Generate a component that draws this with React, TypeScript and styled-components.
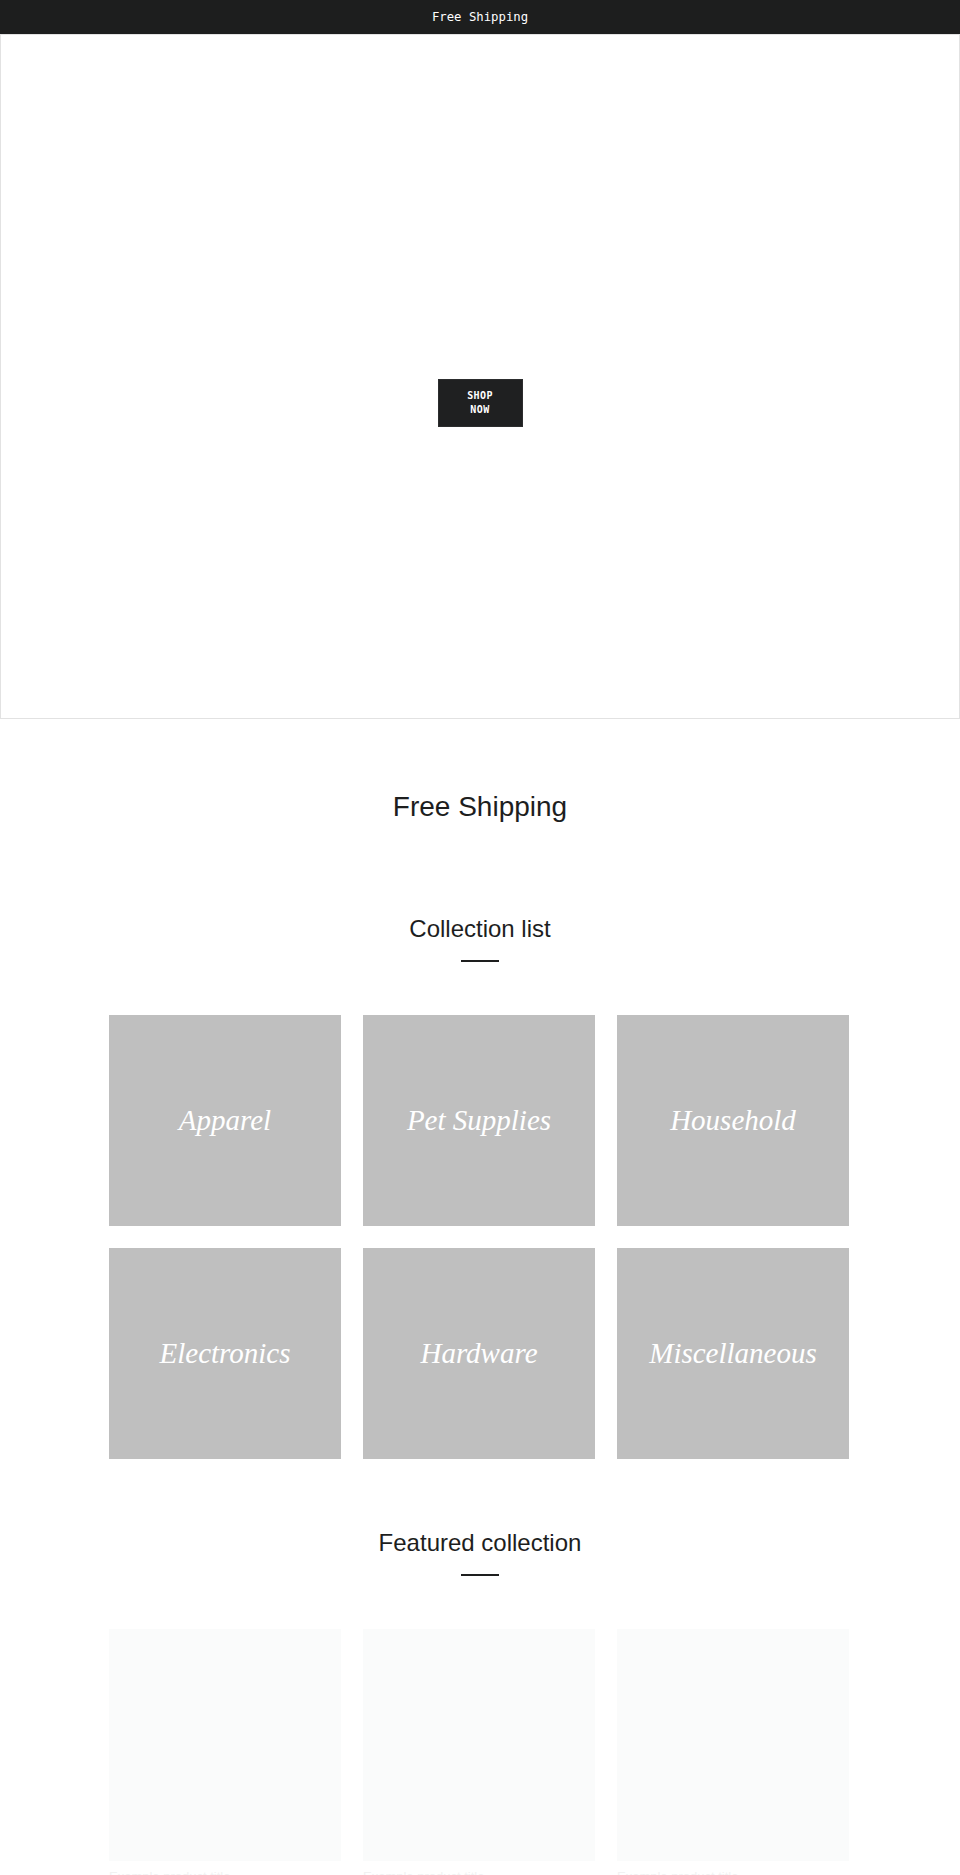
import styled, { createGlobalStyle } from "styled-components";

const GlobalStyle = createGlobalStyle`
  html, body {
    margin: 0;
    padding: 0;
    background: #fff;
  }
  body {
    font-family: "Liberation Sans", Arial, sans-serif;
    color: #1d1e1e;
  }
`;

const AnnouncementBar = styled.div`
  height: 34px;
  background-color: #1d1e1e;
  color: #fff;
  display: flex;
  align-items: center;
  justify-content: center;
  font-family: "DejaVu Sans Mono", monospace;
  font-size: 12.3px;
`;

const Hero = styled.section`
  box-sizing: border-box;
  height: 685px;
  border: 1px solid #e2e2e2;
  display: flex;
  align-items: center;
  justify-content: center;
  padding-top: 52px;
`;

const ShopButton = styled.a`
  box-sizing: border-box;
  width: 85px;
  padding: 9px 22px;
  background-color: #1f2021;
  border: 1px solid #2c2d2e;
  color: #fff;
  text-align: center;
  text-decoration: none;
  font-family: "DejaVu Sans Mono", monospace;
  font-weight: bold;
  font-size: 10px;
  letter-spacing: 0.4px;
  line-height: 14px;
`;

const Banner = styled.h2`
  margin: 71px 0 0;
  text-align: center;
  font-weight: normal;
  font-size: 28px;
  line-height: 34px;
`;

const Section = styled.section<{ $top: number }>`
  margin-top: ${(p) => p.$top}px;
  display: flex;
  flex-direction: column;
  align-items: center;
`;

const SectionTitle = styled.h2`
  margin: 0;
  font-weight: normal;
  font-size: 24px;
  line-height: 29px;
`;

const Rule = styled.hr`
  width: 38px;
  height: 2px;
  margin: 17px 0 53px;
  border: 0;
  background-color: #1d1e1e;
`;

const Grid = styled.div`
  width: 740px;
  margin-right: 2px;
  display: grid;
  grid-template-columns: repeat(3, 1fr);
  column-gap: 22px;
  row-gap: 22px;
`;

const CollectionTile = styled.a`
  height: 211px;
  background-color: #bfbfbf;
  display: flex;
  align-items: center;
  justify-content: center;
  color: #fff;
  text-decoration: none;
  font-family: "Liberation Serif", "Times New Roman", serif;
  font-style: italic;
  font-size: 29px;
`;

const ProductCard = styled.div`
  display: flex;
  flex-direction: column;
`;

const ProductImage = styled.div`
  aspect-ratio: 1 / 1;
  background-color: #fafbfb;
`;

const ProductTitle = styled.div`
  margin-top: 8px;
  font-size: 13px;
  color: #f1f2f2;
`;

const collections = [
  "Apparel",
  "Pet Supplies",
  "Household",
  "Electronics",
  "Hardware",
  "Miscellaneous",
];

const products = ["Example product title", "Example product title", "Example product title"];

export default function App() {
  return (
    <>
      <GlobalStyle />
      <AnnouncementBar>Free Shipping</AnnouncementBar>
      <Hero>
        <ShopButton href="#">SHOP NOW</ShopButton>
      </Hero>
      <Banner>Free Shipping</Banner>

      <Section $top={90}>
        <SectionTitle>Collection list</SectionTitle>
        <Rule />
        <Grid>
          {collections.map((name) => (
            <CollectionTile key={name} href="#">
              {name}
            </CollectionTile>
          ))}
        </Grid>
      </Section>

      <Section $top={69}>
        <SectionTitle>Featured collection</SectionTitle>
        <Rule />
        <Grid>
          {products.map((title, i) => (
            <ProductCard key={i}>
              <ProductImage />
              <ProductTitle>{title}</ProductTitle>
            </ProductCard>
          ))}
        </Grid>
      </Section>
    </>
  );
}
